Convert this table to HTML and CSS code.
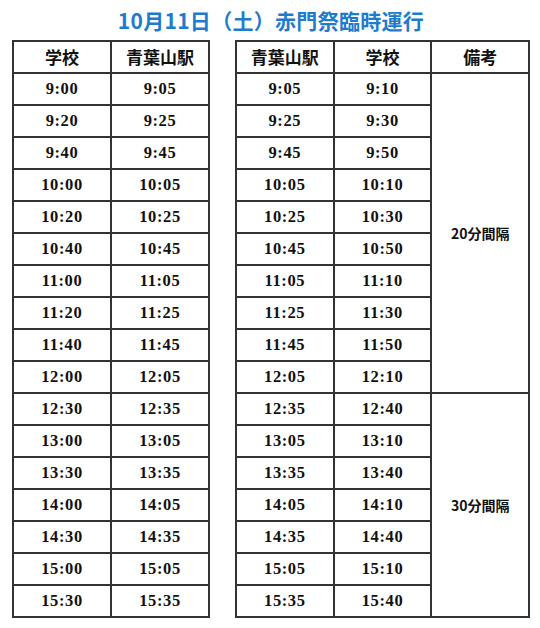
FILE: index.html
```html
<!DOCTYPE html>
<html lang="ja">
<head>
<meta charset="utf-8">
<link rel="stylesheet" href="styles.css">
</head>
<body>
<div class="page">
  <h1 class="title">10月11日（土）赤門祭臨時運行</h1>
  <div class="tables">
    <table class="tt left">
      <thead>
        <tr><th>学校</th><th>青葉山駅</th></tr>
      </thead>
      <tbody>
        <tr><td>9:00</td><td>9:05</td></tr>
        <tr><td>9:20</td><td>9:25</td></tr>
        <tr><td>9:40</td><td>9:45</td></tr>
        <tr><td>10:00</td><td>10:05</td></tr>
        <tr><td>10:20</td><td>10:25</td></tr>
        <tr><td>10:40</td><td>10:45</td></tr>
        <tr><td>11:00</td><td>11:05</td></tr>
        <tr><td>11:20</td><td>11:25</td></tr>
        <tr><td>11:40</td><td>11:45</td></tr>
        <tr><td>12:00</td><td>12:05</td></tr>
        <tr><td>12:30</td><td>12:35</td></tr>
        <tr><td>13:00</td><td>13:05</td></tr>
        <tr><td>13:30</td><td>13:35</td></tr>
        <tr><td>14:00</td><td>14:05</td></tr>
        <tr><td>14:30</td><td>14:35</td></tr>
        <tr><td>15:00</td><td>15:05</td></tr>
        <tr><td>15:30</td><td>15:35</td></tr>
      </tbody>
    </table>
    <table class="tt right">
      <thead>
        <tr><th>青葉山駅</th><th>学校</th><th>備考</th></tr>
      </thead>
      <tbody>
        <tr><td>9:05</td><td>9:10</td><td class="note" rowspan="10">20分間隔</td></tr>
        <tr><td>9:25</td><td>9:30</td></tr>
        <tr><td>9:45</td><td>9:50</td></tr>
        <tr><td>10:05</td><td>10:10</td></tr>
        <tr><td>10:25</td><td>10:30</td></tr>
        <tr><td>10:45</td><td>10:50</td></tr>
        <tr><td>11:05</td><td>11:10</td></tr>
        <tr><td>11:25</td><td>11:30</td></tr>
        <tr><td>11:45</td><td>11:50</td></tr>
        <tr><td>12:05</td><td>12:10</td></tr>
        <tr><td>12:35</td><td>12:40</td><td class="note" rowspan="7">30分間隔</td></tr>
        <tr><td>13:05</td><td>13:10</td></tr>
        <tr><td>13:35</td><td>13:40</td></tr>
        <tr><td>14:05</td><td>14:10</td></tr>
        <tr><td>14:35</td><td>14:40</td></tr>
        <tr><td>15:05</td><td>15:10</td></tr>
        <tr><td>15:35</td><td>15:40</td></tr>
      </tbody>
    </table>
  </div>
</div>
</body>
</html>
```

FILE: styles.css
```css
html, body {
  margin: 0;
  padding: 0;
  background: #ffffff;
}

.page {
  width: 518px;
  padding-left: 12px;
}

.title {
  margin: 0;
  height: 40px;
  line-height: 40px;
  text-align: center;
  font-family: "Noto Sans CJK JP", "Noto Sans", sans-serif;
  font-weight: 700;
  font-size: 21px;
  color: #1f7bcc;
  letter-spacing: 0.3px;
}

.tables {
  display: flex;
  gap: 25px;
  align-items: flex-start;
}

.tt {
  border-collapse: collapse;
  table-layout: fixed;
  border: 2px solid #333333;
}

.tt.left {
  width: 198px;
}

.tt.right {
  width: 295px;
}

.tt th,
.tt td {
  border: 2px solid #333333;
  padding: 0;
  height: 30px;
  text-align: center;
  vertical-align: middle;
  color: #111111;
}

.tt th {
  font-family: "Noto Sans CJK JP", "Noto Sans", sans-serif;
  font-weight: 700;
  font-size: 17px;
  line-height: 20px;
}

.tt td {
  font-family: "Liberation Serif", "DejaVu Serif", serif;
  font-weight: 700;
  font-size: 16.5px;
  line-height: 20px;
  letter-spacing: 0.6px;
}

.tt td.note {
  font-family: "Noto Sans CJK JP", "Noto Sans", sans-serif;
  font-weight: 700;
  font-size: 14px;
  letter-spacing: 0;
}
```
